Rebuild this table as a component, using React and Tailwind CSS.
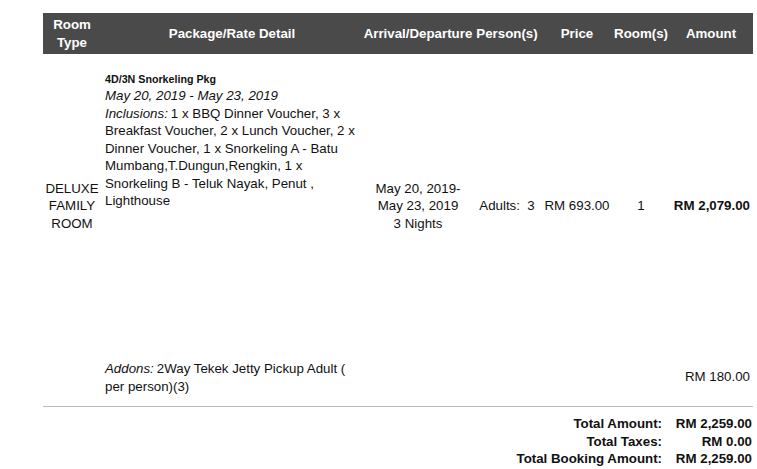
import React from "react";

const cols = "grid grid-cols-[58px_262px_110px_68px_72px_56px_84px]";

const totals = [
  ["Total Amount:", "RM 2,259.00"],
  ["Total Taxes:", "RM 0.00"],
  ["Total Booking Amount:", "RM 2,259.00"],
];

export default function App() {
  return (
    <div className="w-[757px] h-[469px] bg-white overflow-hidden font-['Liberation_Sans',Arial,sans-serif] text-[13.3px] leading-[17.5px] text-[#111]">
      <div className="ml-[43px] mt-[13px] w-[710px]">
        <div className={`${cols} h-[41px] bg-[#4a4a4a] text-white font-bold leading-[18px] text-center items-center`}>
          <div className="px-[2px]">Room Type</div>
          <div>Package/Rate Detail</div>
          <div>Arrival/Departure</div>
          <div>Person(s)</div>
          <div>Price</div>
          <div>Room(s)</div>
          <div>Amount</div>
        </div>

        <div className={`${cols} mt-[10px] h-[284px] items-center text-center`}>
          <div>
            DELUXE
            <br />
            FAMILY
            <br />
            ROOM
          </div>
          <div className="self-start pt-[8px] pl-[4px] pr-[2px] text-left">
            <div className="font-bold text-[10.7px] leading-[15px]">4D/3N Snorkeling Pkg</div>
            <div className="italic">May 20, 2019 - May 23, 2019</div>
            <div>
              <span className="italic pr-[3px]">Inclusions:</span>1 x BBQ Dinner Voucher, 3 x Breakfast Voucher, 2 x
              Lunch Voucher, 2 x Dinner Voucher, 1 x Snorkeling A - Batu Mumbang,T.Dungun,Rengkin, 1 x
              Snorkeling B - Teluk Nayak, Penut , Lighthouse
            </div>
          </div>
          <div>
            May 20, 2019-
            <br />
            May 23, 2019
            <br />
            3 Nights
          </div>
          <div>Adults:{"\u00a0"} 3</div>
          <div>RM 693.00</div>
          <div>1</div>
          <div className="text-right pr-[3px] font-bold">RM 2,079.00</div>
        </div>

        <div className={`${cols} h-[59px] items-center border-b border-[#bbbbbb]`}>
          <div />
          <div className="pl-[4px] pr-[2px] pt-[1px]">
            <span className="italic pr-[3px]">Addons:</span>2Way Tekek Jetty Pickup Adult ( per person)(3)
          </div>
          <div />
          <div />
          <div />
          <div />
          <div className="text-right pr-[3px]">RM 180.00</div>
        </div>

        <div className="flex justify-end pt-[8px] pr-[1px] font-bold">
          <div className="text-right">
            {totals.map(([label]) => (
              <div key={label}>{label}</div>
            ))}
          </div>
          <div className="w-[90px] text-right">
            {totals.map(([label, value]) => (
              <div key={label}>{value}</div>
            ))}
          </div>
        </div>
      </div>
    </div>
  );
}
